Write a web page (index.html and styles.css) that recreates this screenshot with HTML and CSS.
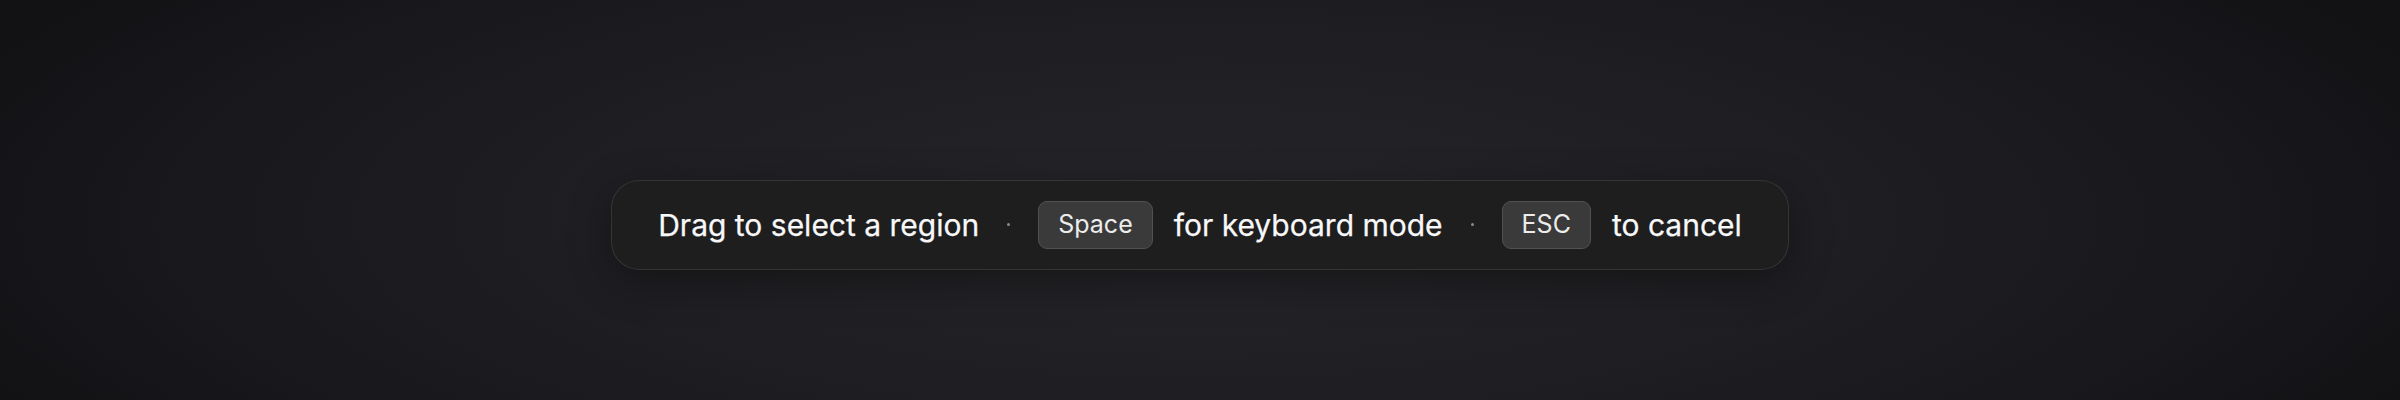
FILE: index.html
```html
<!DOCTYPE html>
<html lang="en">
<head>
<meta charset="utf-8">
<title>Region select hint</title>
<link rel="stylesheet" href="styles.css">
</head>
<body>
  <main class="stage">
    <div class="hint">
      <span class="label">Drag to select a region</span>
      <span class="sep"></span>
      <span class="group"><kbd class="key">Space</kbd><span class="label">for keyboard mode</span></span>
      <span class="sep"></span>
      <span class="group"><kbd class="key">ESC</kbd><span class="label">to cancel</span></span>
    </div>
  </main>
</body>
</html>
```

FILE: styles.css
```css
* { box-sizing: border-box; }
html, body { margin: 0; height: 100%; }
body {
  font-family: Inter, "Noto Sans", "Liberation Sans", sans-serif;
  background: radial-gradient(ellipse 55% 100% at 50% 55%, #252529 0%, #1f1f23 45%, #18181c 80%, #121215 100%);
  color: #f5f5f7;
}
.stage {
  height: 400px;
  padding-top: 49px;
  display: flex;
  align-items: center;
  justify-content: center;
}
.hint {
  display: flex;
  align-items: center;
  gap: 28px;
  height: 90px;
  padding: 0 46px;
  background: #1e1e1f;
  border: 1px solid rgba(255, 255, 255, 0.1);
  border-radius: 28px;
  box-shadow: 0 12px 40px rgba(0, 0, 0, 0.35);
}
.label {
  font-size: 30px;
  font-weight: 400;
  letter-spacing: 0;
  white-space: nowrap;
  color: #f8f8f9;
  -webkit-text-stroke: 0.25px #f8f8f9;
}
.group {
  display: flex;
  align-items: center;
  gap: 21px;
}
.key {
  font-family: inherit;
  font-size: 25px;
  line-height: 1;
  height: 48px;
  padding: 0 19px;
  display: flex;
  align-items: center;
  background: #3a3a3b;
  border: 1px solid #515152;
  border-radius: 9px;
  color: #ececec;
}
.sep {
  width: 3px;
  height: 3px;
  border-radius: 50%;
  background: #8a8a8c;
}
```
